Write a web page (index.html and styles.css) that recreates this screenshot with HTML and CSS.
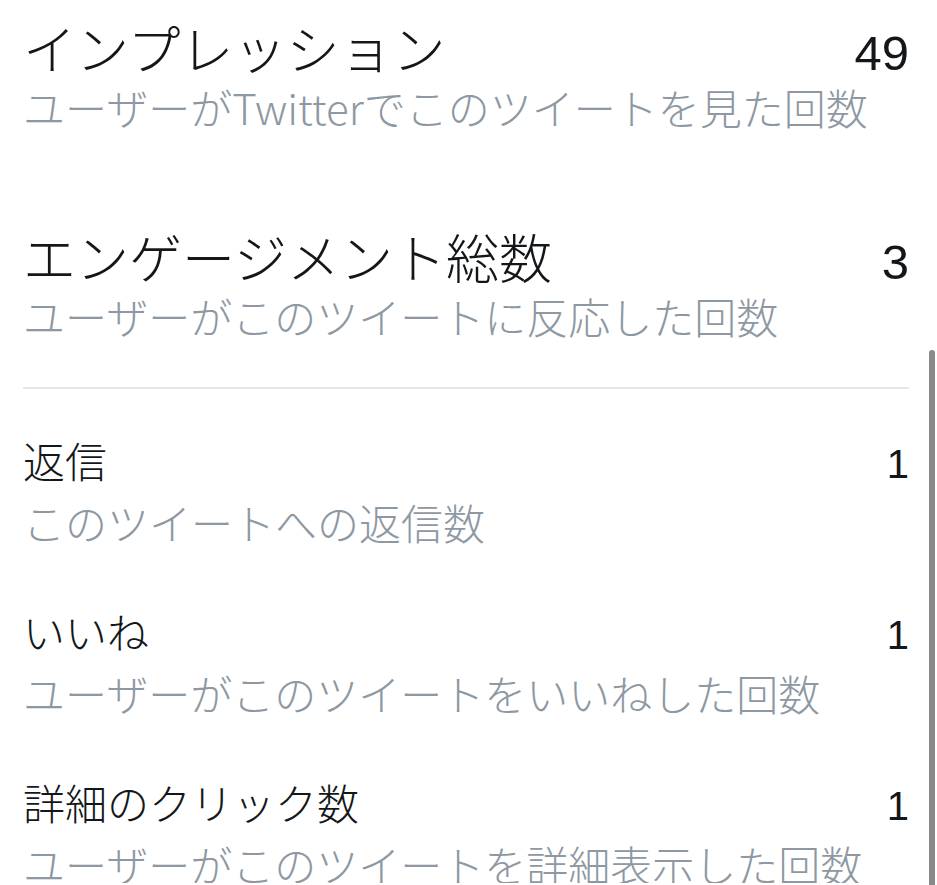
FILE: index.html
```html
<!DOCTYPE html>
<html lang="ja">
<head>
    <meta charset="UTF-8">
    <meta name="viewport" content="width=device-width, initial-scale=1.0">
    <title>ツイートアクティビティ</title>
    <link rel="stylesheet" href="styles.css">
</head>
<body>
    <div id="stats">
        <div class="summary">
            <div class="row">
                <span class="label">インプレッション</span>
                <span class="value">49</span>
            </div>
            <div class="desc">ユーザーがTwitterでこのツイートを見た回数</div>
        </div>

        <div class="summary">
            <div class="row">
                <span class="label">エンゲージメント総数</span>
                <span class="value">3</span>
            </div>
            <div class="desc">ユーザーがこのツイートに反応した回数</div>
        </div>

        <hr class="divider">

        <div class="item">
            <div class="row">
                <span class="label">返信</span>
                <span class="value">1</span>
            </div>
            <div class="desc">このツイートへの返信数</div>
        </div>

        <div class="item">
            <div class="row">
                <span class="label">いいね</span>
                <span class="value">1</span>
            </div>
            <div class="desc">ユーザーがこのツイートをいいねした回数</div>
        </div>

        <div class="item">
            <div class="row">
                <span class="label">詳細のクリック数</span>
                <span class="value">1</span>
            </div>
            <div class="desc">ユーザーがこのツイートを詳細表示した回数</div>
        </div>
    </div>

    <!-- scroll indicator -->
    <div class="scroll-thumb"></div>
</body>
</html>
```

FILE: styles.css
```css
body {
    margin: 0;
    padding: 0;
    background: #fff;
    font-family: "Noto Sans CJK JP", sans-serif;
    font-weight: 300;
    color: #14171a;
    overflow: hidden;
}

#stats {
    padding: 18px 28px 0 23px;
}

.row {
    display: flex;
    justify-content: space-between;
    align-items: baseline;
}

.value {
    font-family: "Liberation Sans", "Noto Sans CJK JP", sans-serif;
    font-weight: 400;
    line-height: 1; /* keeps the row from growing on baseline align */
}

.desc {
    color: #8d98a3;
    font-size: 42px;
    line-height: 50px;
    white-space: nowrap;
}

.summary {
    margin-bottom: 95px;
}

.summary .row {
    font-size: 53px;
    line-height: 58px;
}

.summary .value {
    font-size: 49px;
}

.summary .desc {
    margin-top: 4px;
}

.summary:nth-of-type(2) {
    margin-bottom: 0;
}

.divider {
    border: 0;
    border-top: 2px solid #e1e8ed;
    margin: 46px 0 46px 0;
}

.item {
    margin-bottom: 65px;
}

.item:last-child {
    margin-bottom: 0;
}

.item .row {
    font-size: 42px;
    line-height: 50px;
}

.item .value {
    font-size: 40px;
}

.item .desc {
    line-height: 38px;
    margin-top: 18px;
}

.scroll-thumb {
    position: fixed;
    top: 350px;
    right: 2px;
    bottom: 0;
    width: 6px;
    background: #8a8a8a;
    border-radius: 3px 3px 0 0;
}
```
